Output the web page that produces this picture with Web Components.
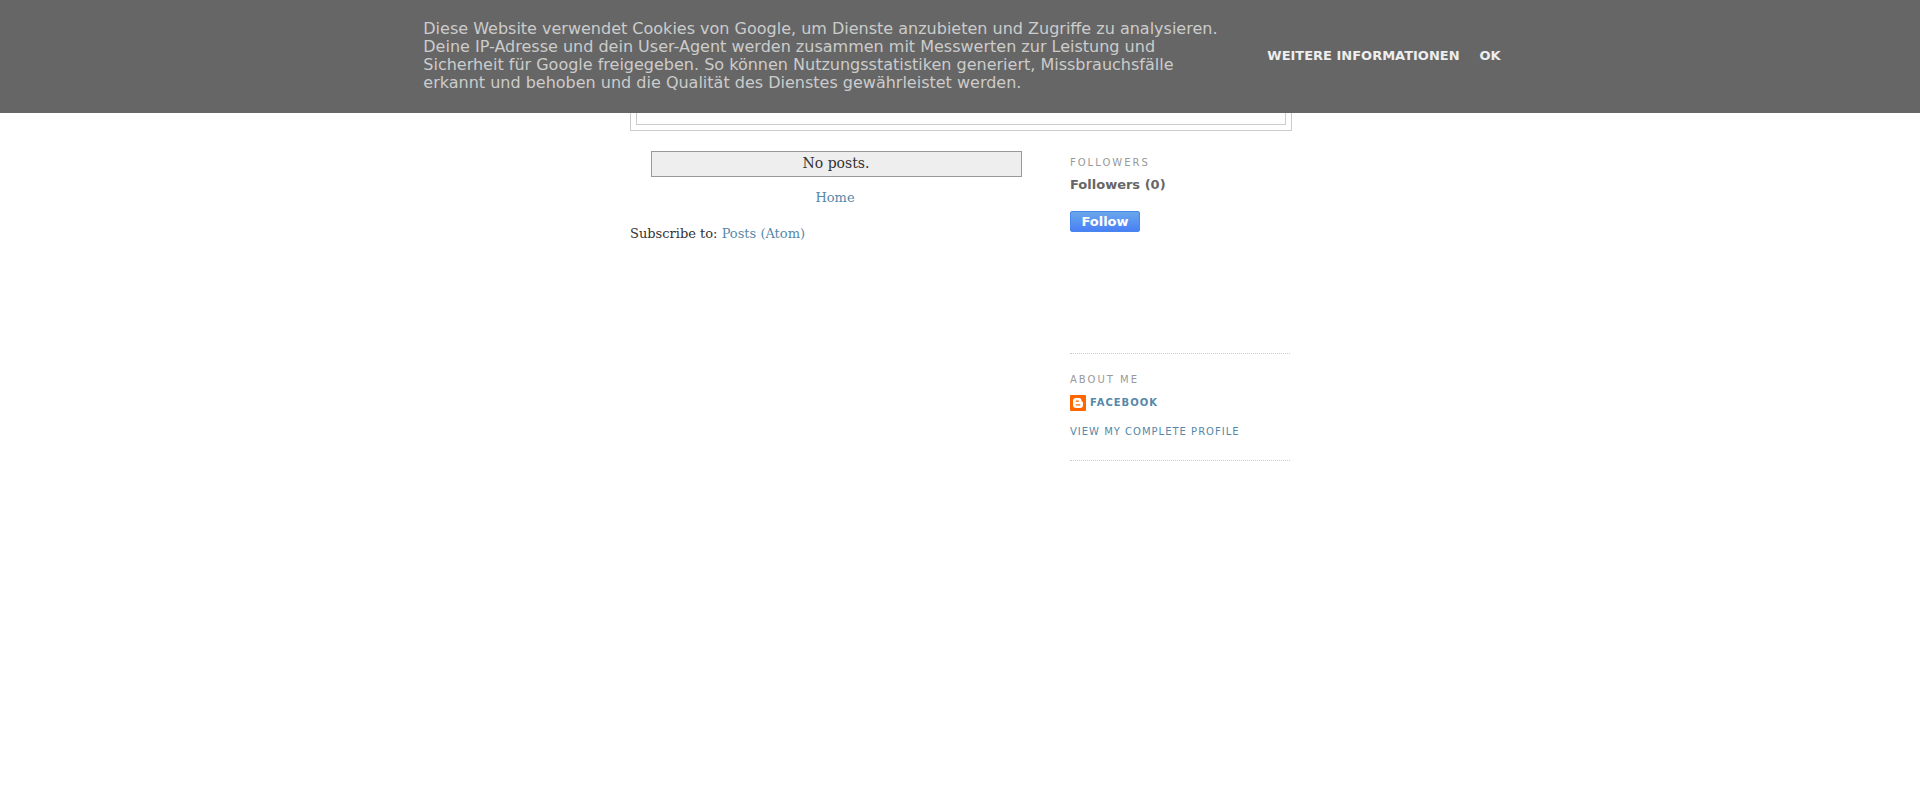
<!DOCTYPE html>
<html lang="en">
<head>
<meta charset="utf-8">
<meta name="viewport" content="width=device-width, initial-scale=1">
<title>Blog</title>
<style>
body { margin: 0; background: #fff; color: #333; font: 13px/20px "DejaVu Serif", serif; }
</style>
</head>
<body>
<cookie-notice lang="de">Diese Website verwendet Cookies von Google, um Dienste anzubieten und Zugriffe zu analysieren. Deine IP-Adresse und dein User-Agent werden zusammen mit Messwerten zur Leistung und Sicherheit für Google freigegeben. So können Nutzungsstatistiken generiert, Missbrauchsfälle erkannt und behoben und die Qualität des Dienstes gewährleistet werden.</cookie-notice>
<blog-page>
  <blog-header slot="header"></blog-header>
  <blog-posts slot="main">No posts.</blog-posts>
  <side-widget slot="sidebar" heading="Followers"><follow-box count="0"></follow-box></side-widget>
  <side-widget slot="sidebar" heading="About Me"><profile-card name="facebook"></profile-card></side-widget>
</blog-page>

<script>
function define(name, html) {
  const template = document.createElement('template');
  template.innerHTML = html;
  customElements.define(name, class extends HTMLElement {
    constructor() {
      super();
      this.attachShadow({ mode: 'open' }).append(template.content.cloneNode(true));
    }
    connectedCallback() {
      this.shadowRoot.querySelectorAll('[data-attr]').forEach(el => {
        el.textContent = this.getAttribute(el.dataset.attr);
      });
    }
  });
}

define('cookie-notice', `
<style>
:host { position: fixed; top: 0; left: 0; right: 0; z-index: 10; background: #666; color: #ccc; font: 16px/18px "DejaVu Sans", sans-serif; }
.inner { display: flex; justify-content: center; align-items: center; gap: 44px; padding: 20px 20px 21px 24px; }
p { margin: 0; max-width: 800px; }
nav { display: flex; gap: 20px; font-size: 13px; font-weight: bold; text-transform: uppercase; white-space: nowrap; }
a { color: #eee; text-decoration: none; }
</style>
<div class="inner">
  <p><slot></slot></p>
  <nav><a href="#info">Weitere Informationen</a><a href="#ok">OK</a></nav>
</div>`);

define('blog-page', `
<style>
:host { display: block; max-width: 660px; margin: 0 auto; padding-top: 40px; }
.columns { display: flex; justify-content: space-between; gap: 30px; padding-top: 20px; }
main { flex: 1; min-width: 0; }
aside { flex: 0 0 220px; }
</style>
<slot name="header"></slot>
<div class="columns">
  <main><slot name="main"></slot></main>
  <aside><slot name="sidebar"></slot></aside>
</div>`);

define('blog-header', `
<style>
:host { display: block; width: 100%; border: 1px solid #ccc; }
header { margin: 5px; min-height: 77px; border: 1px solid #ccc; }
</style>
<header></header>`);

define('blog-posts', `
<style>
:host { display: block; }
.status { width: 90%; margin: 0 5%; padding-bottom: 2px; border: 1px solid #999; background: #eee; text-align: center; font-size: 14px; line-height: 22px; }
.pager { margin: 11px 0 16px; text-align: center; }
a { color: #58a; text-decoration: none; }
</style>
<div class="status"><slot></slot></div>
<div class="pager"><a href="#home">Home</a></div>
<div>Subscribe to: <a href="#atom">Posts (Atom)</a></div>`);

define('side-widget', `
<style>
:host { display: block; margin-bottom: 14px; padding-bottom: 20px; border-bottom: 1px dotted #ccc; color: #666; }
h2 { margin: 0 0 5px; padding-top: 5px; color: #999; font: 10px/14px "DejaVu Sans", sans-serif; letter-spacing: 2px; text-transform: uppercase; }
</style>
<h2 data-attr="heading"></h2>
<slot></slot>`);

define('follow-box', `
<style>
:host { display: block; min-height: 158px; font: bold 13px/20px "DejaVu Sans", sans-serif; }
button { display: block; min-width: 70px; margin-top: 16px; padding: 0 10px; border: 1px solid #4787ed; border-radius: 2px; background: linear-gradient(#69a7e9, #4a80f8); color: #fff; font: inherit; line-height: 19px; }
</style>
<div>Followers (<span data-attr="count"></span>)</div>
<button type="button">Follow</button>`);

define('profile-card', `
<style>
:host { display: block; padding-top: 3px; font: 10px/16px "DejaVu Sans", sans-serif; letter-spacing: 1px; text-transform: uppercase; }
a { display: flex; align-items: center; gap: 4px; color: #58a; text-decoration: none; }
.name { margin-bottom: 13px; font-weight: bold; }
</style>
<a class="name" href="#profile">
  <svg width="16" height="16" viewBox="0 0 16 16" aria-hidden="true">
    <rect width="16" height="16" rx="1" fill="#f60"/>
    <path fill="#fff" d="M6 3h3a2.500 2.500 0 0 1 2.500 2.500q0 1.300 1 1.300.5 0 .5.700V10a3 3 0 0 1-3 3H6a3 3 0 0 1-3-3V6a3 3 0 0 1 3-3z"/>
    <path stroke="#f60" stroke-width="1.200" stroke-linecap="round" d="M6.200 6.200h2.200M6.200 9.800h3.600"/>
  </svg>
  <span data-attr="name"></span>
</a>
<a href="#profile">View my complete profile</a>`);
</script>
</body>
</html>
